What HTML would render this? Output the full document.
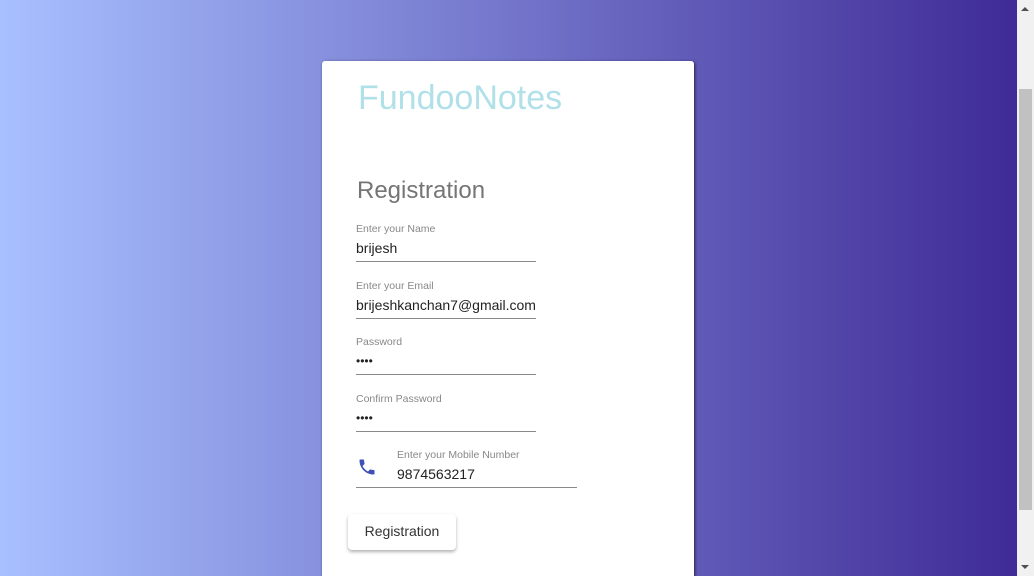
<!DOCTYPE html>
<html style="overflow:hidden;height:576px"><head><style>
*{margin:0;padding:0;box-sizing:border-box}
body{width:1034px;height:576px;overflow:hidden;font-family:"Liberation Sans",Roboto,sans-serif;position:relative}
.bg{position:absolute;left:0;top:0;width:1017px;height:576px;background:linear-gradient(to right,#a8c0ff,#3f2b96)}
.sb{position:absolute;left:1017px;top:0;width:17px;height:576px;background:#f1f1f1}
.thumb{position:absolute;left:2px;top:89px;width:13px;height:421px;background:#c1c1c1}
.ar{position:absolute;left:4px;width:0;height:0;border-left:4px solid transparent;border-right:4px solid transparent}
.card{position:absolute;left:322px;top:61px;width:372px;height:515px;background:#fff;border-radius:3px 3px 0 0;box-shadow:1px 1px 3px rgba(0,0,0,.6)}
.t{position:absolute;left:36px;top:18px;font-size:34px;color:#b0e0e8}
.h{position:absolute;left:35px;top:116px;font-size:24px;color:#757575}
.f{position:absolute;left:34px;width:180px;border-bottom:1px solid #8a8a8a;height:39px}
.f .l{position:absolute;top:0;font-size:10.5px;color:#888}
.f .v{position:absolute;top:17px;font-size:14px;color:#222;white-space:nowrap}
.btn{position:absolute;left:26px;top:453px;width:108px;height:36px;border-radius:4px;box-shadow:0 2px 3px rgba(0,0,0,.3);font-size:14px;color:#333;text-align:center;line-height:34px}
</style></head><body>
<div class="bg"></div>
<div class="sb"><div class="ar" style="top:7px;border-bottom:4px solid #505050"></div><div class="thumb"></div><div class="ar" style="top:565px;border-top:4px solid #505050"></div></div>
<div class="card">
<div class="t">FundooNotes</div>
<div class="h">Registration</div>
<div class="f" style="top:162px"><div class="l">Enter your Name</div><div class="v">brijesh</div></div>
<div class="f" style="top:219px"><div class="l">Enter your Email</div><div class="v">brijeshkanchan7@gmail.com</div></div>
<div class="f" style="top:275px"><div class="l">Password</div><div class="v" style="font-size:12px;top:18px">••••</div></div>
<div class="f" style="top:332px"><div class="l">Confirm Password</div><div class="v" style="font-size:12px;top:18px">••••</div></div>
<div class="f" style="top:388px;width:221px">
<svg style="position:absolute;left:1px;top:8px" width="20" height="20" viewBox="0 0 24 24"><path fill="#3f51b5" d="M6.6 10.8c1.4 2.8 3.8 5.1 6.6 6.6l2.2-2.2c.3-.3.7-.4 1-.2 1.1.4 2.3.6 3.6.6.6 0 1 .4 1 1V20c0 .6-.4 1-1 1C10.6 21 3 13.4 3 4c0-.6.4-1 1-1h3.5c.6 0 1 .4 1 1 0 1.3.2 2.5.6 3.6.1.3 0 .7-.2 1l-2.3 2.2z"/></svg>
<div class="l" style="left:41px">Enter your Mobile Number</div><div class="v" style="left:41px">9874563217</div></div>
<div class="btn">Registration</div>
</div>
</body></html>
